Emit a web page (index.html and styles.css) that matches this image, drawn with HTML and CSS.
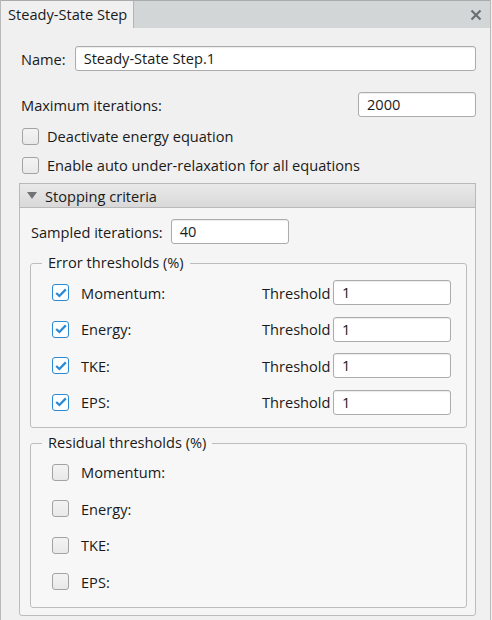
FILE: index.html
```html
<!DOCTYPE html>
<html>
<head>
<meta charset="utf-8">
<link rel="stylesheet" href="styles.css">
</head>
<body>
<div class="window">
  <div class="tabbar">
    <div class="tab">Steady-State Step</div>
    <div class="close">
      <svg width="12" height="12" viewBox="0 0 12 12"><path d="M1.5 1.5 L10.5 10.5 M10.5 1.5 L1.5 10.5" stroke="#6b6e70" stroke-width="2.2" stroke-linecap="butt"/></svg>
    </div>
  </div>
  <div class="content">
    <div class="row name-row">
      <span class="label">Name:</span>
      <div class="input wide">Steady-State Step.1</div>
    </div>
    <div class="row max-row">
      <span class="label">Maximum iterations:</span>
      <div class="input num">2000</div>
    </div>
    <div class="cbrow first">
      <span class="cb"></span><span class="cblabel">Deactivate energy equation</span>
    </div>
    <div class="cbrow second">
      <span class="cb"></span><span class="cblabel">Enable auto under-relaxation for all equations</span>
    </div>
    <div class="section">
      <div class="section-head">
        <svg class="tri" width="10" height="7" viewBox="0 0 10 7"><path d="M0 0 H10 L5 7 Z" fill="#707274"/></svg>
        <span>Stopping criteria</span>
      </div>
      <div class="section-body">
        <div class="row sampled">
          <span class="label">Sampled iterations:</span>
          <div class="input num">40</div>
        </div>
        <fieldset class="group">
          <legend>Error thresholds (%)</legend>
          <div class="trow"><span class="cb checked"><svg width="12" height="10" viewBox="0 0 12 10"><path d="M1.2 5 L4.4 8 L10.8 1.4" fill="none" stroke="#2a8ad4" stroke-width="2.3"/></svg></span><span class="tlabel">Momentum:</span><span class="thr">Threshold</span><div class="input tin">1</div></div>
          <div class="trow"><span class="cb checked"><svg width="12" height="10" viewBox="0 0 12 10"><path d="M1.2 5 L4.4 8 L10.8 1.4" fill="none" stroke="#2a8ad4" stroke-width="2.3"/></svg></span><span class="tlabel">Energy:</span><span class="thr">Threshold</span><div class="input tin">1</div></div>
          <div class="trow"><span class="cb checked"><svg width="12" height="10" viewBox="0 0 12 10"><path d="M1.2 5 L4.4 8 L10.8 1.4" fill="none" stroke="#2a8ad4" stroke-width="2.3"/></svg></span><span class="tlabel">TKE:</span><span class="thr">Threshold</span><div class="input tin">1</div></div>
          <div class="trow"><span class="cb checked"><svg width="12" height="10" viewBox="0 0 12 10"><path d="M1.2 5 L4.4 8 L10.8 1.4" fill="none" stroke="#2a8ad4" stroke-width="2.3"/></svg></span><span class="tlabel">EPS:</span><span class="thr">Threshold</span><div class="input tin">1</div></div>
        </fieldset>
        <fieldset class="group residual">
          <legend>Residual thresholds (%)</legend>
          <div class="trow"><span class="cb"></span><span class="tlabel">Momentum:</span></div>
          <div class="trow"><span class="cb"></span><span class="tlabel">Energy:</span></div>
          <div class="trow"><span class="cb"></span><span class="tlabel">TKE:</span></div>
          <div class="trow"><span class="cb"></span><span class="tlabel">EPS:</span></div>
        </fieldset>
      </div>
    </div>
  </div>
</div>
</body>
</html>
```
FILE: styles.css
```css
* { box-sizing: border-box; }
html, body { margin: 0; padding: 0; }
body {
  width: 492px;
  height: 620px;
  overflow: hidden;
  background: #f0f0f0;
  font-family: "Open Sans", "Noto Sans", sans-serif;
  font-size: 14.6px;
  color: #1a1a1a;
}
.window {
  height: 620px;
  border-left: 1px solid #b9b9b9;
  border-right: 1px solid #b9b9b9;
  margin-right: 1px;
}
.tabbar {
  height: 28px;
  display: flex;
  align-items: stretch;
  background: #d3d6d7;
  border-top: 1px solid #a9abac;
}
.tab {
  background: #f0f0f0;
  width: 133px;
  padding-left: 7px;
  line-height: 26px;
  border-right: 1px solid #b4b4b4;
  white-space: nowrap;
}
.close {
  margin-left: auto;
  margin-right: 8px;
  display: flex;
  align-items: center;
}
.content {
  padding: 18px 14px 0 17px;
}
.row {
  display: flex;
  align-items: center;
  height: 25px;
}
.label {
  padding-left: 3px;
  white-space: nowrap;
}
.input {
  height: 25px;
  background: #fff;
  border: 1px solid #acacac;
  border-radius: 3px;
  box-shadow: inset 0 1px 1px rgba(0,0,0,0.08);
  padding-left: 8px;
  line-height: 23px;
}
.input.wide { margin-left: 9px; flex: 1; }
.input.num { width: 118px; }
.max-row { margin-top: 21px; justify-content: space-between; }
.cbrow {
  display: flex;
  align-items: center;
  height: 20px;
  padding-left: 4px;
}
.cbrow.first { margin-top: 9px; }
.cbrow.second { margin-top: 9px; }
.cb {
  width: 17px;
  height: 17px;
  flex: none;
  border: 1px solid #a3a3a3;
  border-radius: 3px;
  background: linear-gradient(#f3f3f3, #e9e9e9);
  display: flex;
  align-items: center;
  justify-content: center;
}
.cb.checked {
  border-color: #2a8ad4;
  background: #fff;
}
.cblabel { margin-left: 8px; white-space: nowrap; }
.section {
  margin-top: 8px;
  margin-left: 1px;
  border: 1px solid #bcbcbc;
  border-radius: 0 0 3px 3px;
  background: #f5f5f5;
  height: 433px;
}
.section-head {
  height: 25px;
  margin: -1px -1px 0 -1px;
  border: 1px solid #b9b9b9;
  background: linear-gradient(#e9e9e9, #d9d9d9);
  display: flex;
  align-items: center;
  padding-left: 7px;
}
.tri { margin-right: 8px; }
.section-body { padding: 11px 8px 0 9px; }
.sampled .label { padding-left: 2px; }
.sampled .input { margin-left: 8px; }
.group {
  margin: 9px 0 0 1px;
  padding: 6px 15px 12px 21px;
  border: 1px solid #bdbdbd;
  border-radius: 3px;
  background: #f7f7f7;
  display: flex;
  flex-direction: column;
  gap: 11.5px;
}
.group legend {
  padding: 0 6px 3px 6px;
  margin-left: -10px;
  line-height: 18px;
}
.group.residual { margin-top: 5px; padding-bottom: 13px; }
.trow {
  display: flex;
  align-items: center;
  height: 25px;
}
.tlabel { margin-left: 12px; width: 181px; white-space: nowrap; }
.thr { white-space: nowrap; width: 71px; }
.input.tin { width: 118px; }
```
